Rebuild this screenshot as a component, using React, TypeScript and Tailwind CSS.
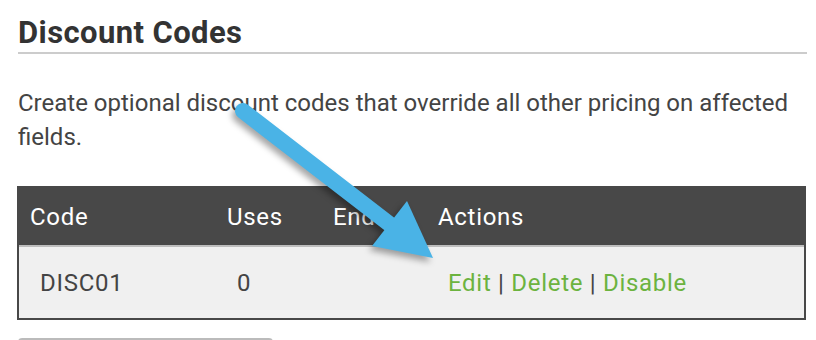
export default function App() {
  return (
    <div className="relative w-[816px] h-[340px] overflow-hidden bg-white font-['Roboto',sans-serif]">
      <div className="px-[18px] pt-[15px]">
        <h1 className="text-[31px] leading-[36px] font-bold tracking-[0.4px] text-[#333]">Discount Codes</h1>
        <div className="mt-[1px] h-[2px] w-[789px] bg-[#cccccc]" />
        <p className="mt-[32px] w-[790px] text-[24px] leading-[34px] text-[#444]">
          Create optional discount codes that override all other pricing on affected fields.
        </p>
      </div>

      {/* Tabla */}
      <div className="ml-[17px] mt-[32px] w-[789px] border-2 border-t-0 border-[#484848]">
        <table className="w-full table-fixed text-[24px] tracking-[0.7px] text-left">
          <thead>
            <tr className="h-[60px] bg-[#484848] text-white border-b-2 border-[#bdbdbd]">
              <th className="w-[197px] pl-[11px] pt-[2px] font-normal">Code</th>
              <th className="w-[106px] pl-[11px] pt-[2px] font-normal">Uses</th>
              <th className="w-[105px] pl-[11px] pt-[2px] font-normal">Ends</th>
              <th className="pl-[11px] pt-[2px] font-normal">Actions</th>
            </tr>
          </thead>
          <tbody>
            <tr className="h-[72px] bg-[#f0f0f0] text-[#444]">
              <td className="pl-[21px]">DISC01</td>
              <td className="pl-[21px]">0</td>
              <td />
              <td className="pl-[21px] text-[#6cb33f]">
                Edit <span className="text-[#444]">|</span> Delete <span className="text-[#444]">|</span> Disable
              </td>
            </tr>
          </tbody>
        </table>
      </div>

      <div className="ml-[18px] mt-[18px] h-[10px] w-[255px] rounded-t-[4px] bg-[#bbbbbb]" />

      {/* Flecha */}
      <svg
        className="absolute left-0 top-0 pointer-events-none"
        width="816"
        height="340"
        viewBox="0 0 816 340"
        style={{ filter: 'drop-shadow(-3px 4px 3px rgba(0,0,0,0.35))' }}
      >
        <line x1="243" y1="111" x2="392" y2="226" stroke="#4ab3e6" strokeWidth="16" strokeLinecap="round" />
        <polygon points="407,201 433,258 372,246" fill="#4ab3e6" />
      </svg>
    </div>
  )
}
